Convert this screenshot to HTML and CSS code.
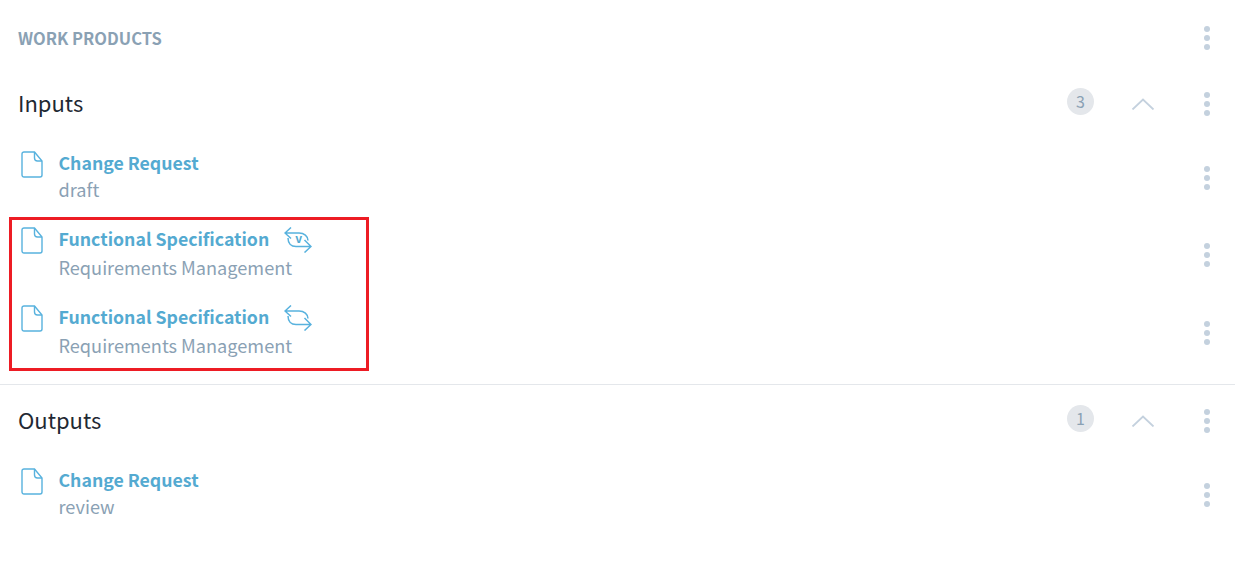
FILE: index.html
```html
<!DOCTYPE html>
<html lang="en">
<head>
  <meta charset="UTF-8">
  <title>Work Products</title>
  <link rel="stylesheet" href="styles.css">
</head>
<body>

  <svg class="icon-defs" width="0" height="0">
    <symbol id="doc" viewBox="0 0 22 27">
      <path d="M3 1h10.500l7.500 9v14a2 2 0 0 1-2 2h-16a2 2 0 0 1-2-2v-21a2 2 0 0 1 2-2z" fill="none" stroke="#58b2de" stroke-width="1.400"/>
      <path d="M13.500 1v6a3 3 0 0 0 3 3h4.500" fill="none" stroke="#58b2de" stroke-width="1.400"/>
    </symbol>
    <symbol id="dots" viewBox="0 0 6 24">
      <circle cx="3" cy="3" r="3"/>
      <circle cx="3" cy="12" r="3"/>
      <circle cx="3" cy="21" r="3"/>
    </symbol>
    <symbol id="chevron" viewBox="0 0 24 12">
      <path d="M1.500 11.500l10.500-10 10.500 10" fill="none" stroke="#c4d1de" stroke-width="1.800"/>
    </symbol>
    <symbol id="sync" viewBox="0 0 28 26">
      <path d="M7 .5l-6 5.500 6 5.500M1 6h14c5 0 9 3 9 7.500" fill="none" stroke="#58b2de" stroke-width="1.500"/>
      <path d="M20.500 13l6.500 6.500-6.500 6M27 19.500h-15c-5 0-8-3.500-8-8.500" fill="none" stroke="#58b2de" stroke-width="1.500"/>
    </symbol>
  </svg>

  <div class="page-head">
    <span class="page-title">WORK PRODUCTS</span>
    <svg class="dots"><use href="#dots"/></svg>
  </div>

  <section class="group group-inputs">
    <div class="group-head">
      <h2>Inputs</h2>
      <span class="count">3</span>
      <svg class="chevron"><use href="#chevron"/></svg>
      <svg class="dots"><use href="#dots"/></svg>
    </div>

    <div class="item">
      <svg class="doc"><use href="#doc"/></svg>
      <div class="item-text">
        <a class="item-name">Change Request</a>
        <div class="item-sub">draft</div>
      </div>
      <svg class="dots"><use href="#dots"/></svg>
    </div>

    <div class="linked">
      <div class="item item-tall">
        <svg class="doc"><use href="#doc"/></svg>
        <div class="item-text">
          <div class="name-line">
            <a class="item-name">Functional Specification</a>
            <span class="sync">
              <svg><use href="#sync"/></svg>
              <span class="sync-v">v</span>
            </span>
          </div>
          <div class="item-sub">Requirements Management</div>
        </div>
        <svg class="dots"><use href="#dots"/></svg>
      </div>

      <div class="item item-tall">
        <svg class="doc"><use href="#doc"/></svg>
        <div class="item-text">
          <div class="name-line">
            <a class="item-name">Functional Specification</a>
            <span class="sync">
              <svg><use href="#sync"/></svg>
            </span>
          </div>
          <div class="item-sub">Requirements Management</div>
        </div>
        <svg class="dots"><use href="#dots"/></svg>
      </div>

      <div class="highlight"></div>
    </div>
  </section>

  <section class="group group-outputs">
    <div class="group-head">
      <h2>Outputs</h2>
      <span class="count">1</span>
      <svg class="chevron"><use href="#chevron"/></svg>
      <svg class="dots"><use href="#dots"/></svg>
    </div>

    <div class="item">
      <svg class="doc"><use href="#doc"/></svg>
      <div class="item-text">
        <a class="item-name">Change Request</a>
        <div class="item-sub">review</div>
      </div>
      <svg class="dots"><use href="#dots"/></svg>
    </div>
  </section>

</body>
</html>
```

FILE: styles.css
```css
body {
  font-family: "Noto Sans CJK SC", "Open Sans", sans-serif;
  background-color: #fff;
  color: #1f2933;
  margin: 0;
}

.icon-defs {
  position: absolute;
}

.page-head {
  display: flex;
  align-items: center;
  justify-content: space-between;
  height: 76px;
  padding: 0 25px 0 18px;
}

.page-title {
  font-size: 16.500px;
  font-weight: 700;
  color: #8aa1b4;
}

.dots {
  width: 6px;
  height: 24px;
  flex: none;
  fill: #c4d1de;
}

.group-inputs {
  border-bottom: 1px solid #e4e7eb;
  padding-bottom: 12px;
}

.group-outputs {
  padding-top: 8px;
}

.group-head {
  display: flex;
  align-items: center;
  height: 56px;
  margin-bottom: 13px;
  padding: 0 25px 0 18px;
}

.group-head h2 {
  flex: 1;
  margin: 0 0 4px;
  font-size: 22px;
  font-weight: 400;
}

.count {
  width: 27px;
  height: 27px;
  margin-top: -5px;
  border-radius: 50%;
  background-color: #e4e7eb;
  color: #8aa1b4;
  font-size: 16px;
  line-height: 27px;
  text-align: center;
}

.chevron {
  width: 24px;
  height: 12px;
  margin: 0 49px 0 37px;
}

.item {
  display: flex;
  align-items: center;
  height: 66px;
  padding: 0 25px 0 21px;
}

.item-tall {
  height: 78px;
}

.doc {
  width: 22px;
  height: 27px;
  margin: 6px 15.500px 0 0;
  flex: none;
  align-self: flex-start;
}

.item-tall .doc {
  margin-top: 11px;
}

.item-text {
  flex: 1;
  margin-bottom: 5px;
}

.item-name {
  font-size: 17.700px;
  font-weight: 700;
  color: #54aad1;
}

.item-sub {
  margin-top: 1px;
  font-size: 18.150px;
  color: #8aa1b4;
}

.item-tall .item-sub {
  margin-top: 3px;
}

.name-line {
  display: flex;
  align-items: center;
}

.sync {
  position: relative;
  width: 28px;
  height: 26px;
  margin: 2px 0 -2px 15px;
}

.sync svg {
  display: block;
  width: 28px;
  height: 26px;
}

.sync-v {
  position: absolute;
  left: 11px;
  top: 4px;
  font-size: 12px;
  font-weight: 700;
  line-height: 14px;
  color: #54aad1;
}

.linked {
  position: relative;
  margin-top: 5px;
}

.highlight {
  position: absolute;
  left: 9px;
  top: 1px;
  width: 354px;
  height: 148px;
  border: 3px solid #ed1c24;
  pointer-events: none;
}
```
